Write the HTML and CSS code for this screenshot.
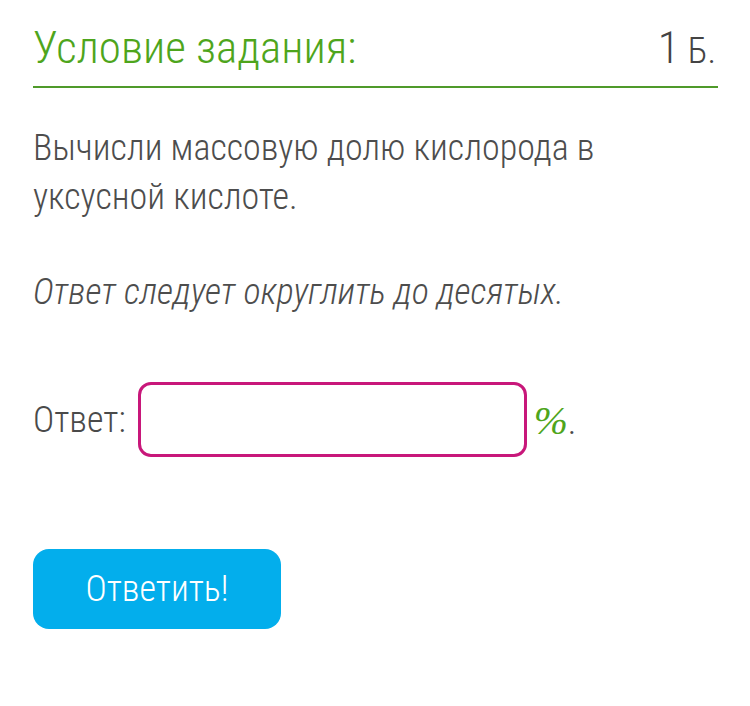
FILE: index.html
```html
<!DOCTYPE html>
<html lang="ru">
<head>
<meta charset="utf-8">
<link rel="stylesheet" href="styles.css">
</head>
<body>
<div class="task">
  <div class="head">
    <h1 class="title">Условие задания:</h1>
    <div class="points"><span class="num">1</span> Б.</div>
  </div>
  <p class="text">Вычисли массовую долю кислорода в уксусной кислоте.</p>
  <p class="note">Ответ следует округлить до десятых.</p>
  <div class="answer">
    <span class="label">Ответ:</span>
    <input class="field" type="text">
    <span class="unit"><span class="pct">%</span>.</span>
  </div>
  <button class="submit">Ответить!</button>
</div>
</body>
</html>
```
FILE: styles.css
```css
html, body {
  margin: 0;
  padding: 0;
  background: #fff;
}
body {
  font-family: "Roboto Condensed", "Liberation Sans Narrow", "Roboto", sans-serif;
  font-stretch: condensed;
  font-weight: 300;
  color: #4a4a4a;
}
.task {
  padding: 20px 32px 0 33px;
}
.head {
  display: flex;
  justify-content: space-between;
  align-items: baseline;
  border-bottom: 2px solid #4f9a2a;
  padding-bottom: 10px;
}
.title {
  margin: 0;
  font-weight: 300;
  font-size: 45px;
  line-height: 56px;
  color: #4ea51c;
}
.points {
  font-size: 36px;
  color: #444;
  padding-right: 2px;
}
.points .num {
  font-size: 45px;
}
.text {
  margin: 36px 0 0;
  font-size: 36px;
  line-height: 49px;
  color: #4d4d4d;
}
.note {
  margin: 46px 0 0;
  font-size: 36px;
  line-height: 48px;
  font-style: italic;
  color: #4d4d4d;
}
.answer {
  display: flex;
  align-items: center;
  margin-top: 66px;
}
.label {
  font-size: 36px;
  margin-right: 12px;
}
.field {
  width: 389px;
  height: 75px;
  box-sizing: border-box;
  border: 3px solid #c8177a;
  border-radius: 13px;
  background: #fff;
  outline: none;
}
.unit {
  margin-left: 7px;
  font-size: 36px;
}
.pct {
  font-family: "Liberation Serif", serif;
  font-style: italic;
  font-weight: 400;
  font-size: 41px;
  color: #4ea51c;
}
.submit {
  display: block;
  margin-top: 92px;
  width: 248px;
  height: 80px;
  border: none;
  border-radius: 16px;
  background: #03aeec;
  color: #fff;
  font-family: inherit;
  font-stretch: condensed;
  font-weight: 300;
  font-size: 36px;
  padding: 0;
}
```
